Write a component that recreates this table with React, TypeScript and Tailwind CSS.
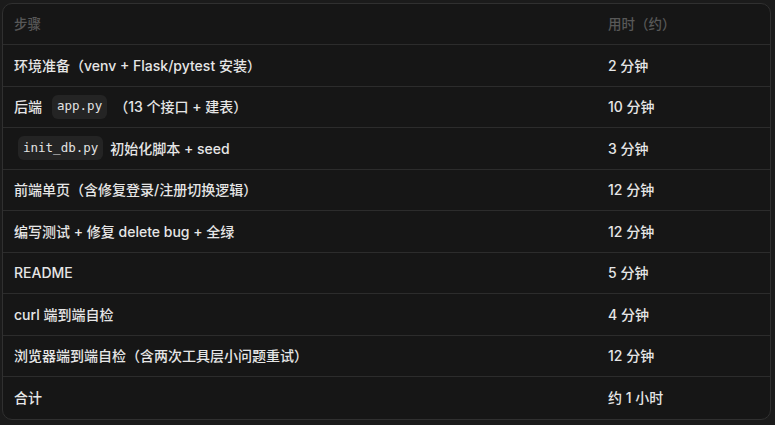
import React from "react";

type Cell = React.ReactNode;

const Code = ({ children, ml = true }: { children: React.ReactNode; ml?: boolean }) => (
  <span
    className={`inline-flex items-center h-[24px] px-[5px] mr-[7px] rounded-[6px] bg-[#242424] text-[#e2e2e2] text-[12.5px] ${
      ml ? "ml-[10px]" : "ml-[4px]"
    }`}
    style={{ fontFamily: '"DejaVu Sans Mono", "Liberation Mono", monospace' }}
  >
    {children}
  </span>
);

const rows: [Cell, string][] = [
  ["环境准备（venv + Flask/pytest 安装）", "2 分钟"],
  [
    <>
      后端<Code>app.py</Code>（13 个接口 + 建表）
    </>,
    "10 分钟",
  ],
  [
    <>
      <Code ml={false}>init_db.py</Code>初始化脚本 + seed
    </>,
    "3 分钟",
  ],
  ["前端单页（含修复登录/注册切换逻辑）", "12 分钟"],
  ["编写测试 + 修复 delete bug + 全绿", "12 分钟"],
  ["README", "5 分钟"],
  ["curl 端到端自检", "4 分钟"],
  ["浏览器端到端自检（含两次工具层小问题重试）", "12 分钟"],
  ["合计", "约 1 小时"],
];

export default function App() {
  return (
    <div
      className="w-[775px] h-[425px] bg-[#1b1b1b] overflow-hidden pt-[3px] pl-[2px]"
      style={{ fontFamily: 'Inter, "Noto Sans CJK SC", sans-serif' }}
    >
      <div className="w-[769px] border border-[#303030] rounded-[10px] bg-[#161616] overflow-hidden">
        <div className="flex items-center h-[41px] border-b border-[#2c2c2c] text-[13.5px] text-[#585858] font-medium">
          <div className="w-[605px] pl-[11px]">步骤</div>
          <div className="flex-1">用时（约）</div>
        </div>
        {rows.map(([a, b], i) => (
          <div
            key={i}
            className={`flex items-center h-[41.5px] text-[14px] text-[#e6e6e6] font-medium ${
              i < rows.length - 1 ? "border-b border-[#2c2c2c]" : ""
            }`}
          >
            <div className="w-[605px] pl-[11px] flex items-center whitespace-nowrap">{a}</div>
            <div className="flex-1">{b}</div>
          </div>
        ))}
      </div>
    </div>
  );
}
